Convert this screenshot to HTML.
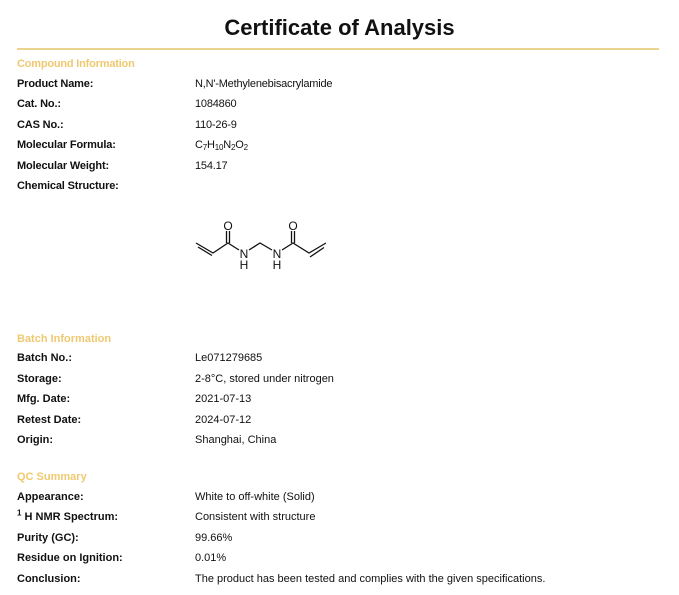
<!DOCTYPE html>
<html><head><meta charset="utf-8"><style>
body{margin:0;width:679px;height:595px;background:#fff;position:relative;font-family:"Liberation Sans",Arial,sans-serif;color:#111;overflow:hidden}
.t{position:absolute;left:0;width:679px;text-align:center;top:15px;font-size:22px;font-weight:bold}
.line{position:absolute;left:17px;width:642px;top:48px;height:2px;background:#ead48f}
.h{position:absolute;left:17px;font-size:11px;font-weight:bold;color:#efc970;line-height:13px}
.l,.v{position:absolute;font-size:11px;line-height:13px;white-space:nowrap}
.l{left:17px;font-weight:bold}
.v{left:195px}
.l.n{letter-spacing:-0.15px}
.v.n,.h.n{letter-spacing:-0.2px}
sub{font-size:8px;vertical-align:-2px;line-height:0}
sup{font-size:8px;line-height:0}
</style></head><body>
<div class="t">Certificate of Analysis</div>
<div class="line"></div>
<div class="h n" style="top:58px">Compound Information</div>
<div class="l n" style="top:78px">Product Name:</div><div class="v n" style="top:78px">N,N'-Methylenebisacrylamide</div>
<div class="l n" style="top:98px">Cat. No.:</div><div class="v n" style="top:98px">1084860</div>
<div class="l n" style="top:119px">CAS No.:</div><div class="v n" style="top:119px">110-26-9</div>
<div class="l n" style="top:139px">Molecular Formula:</div><div class="v n" style="top:139px">C<sub>7</sub>H<sub>10</sub>N<sub>2</sub>O<sub>2</sub></div>
<div class="l n" style="top:160px">Molecular Weight:</div><div class="v n" style="top:160px">154.17</div>
<div class="l n" style="top:180px">Chemical Structure:</div>
<svg style="position:absolute;left:0;top:0" width="679" height="595" font-family="Liberation Sans" font-size="12" fill="#111">
<g stroke="#111" stroke-width="1.3" fill="none">
<polyline points="196,243 213,253 228,243 239,250"/>
<line x1="198" y1="247" x2="212" y2="255.5"/>
<line x1="226.5" y1="243" x2="226.5" y2="231"/><line x1="229.5" y1="243" x2="229.5" y2="231"/>
<polyline points="249,250 260,243 272,250"/>
<polyline points="282,250 293,243 309,253 326,243"/>
<line x1="291.5" y1="243" x2="291.5" y2="231"/><line x1="294.5" y1="243" x2="294.5" y2="231"/>
<line x1="310" y1="257" x2="324" y2="247.5"/>
</g>
<text x="228" y="230" text-anchor="middle">O</text>
<text x="293" y="230" text-anchor="middle">O</text>
<text x="244" y="258" text-anchor="middle">N</text>
<text x="244" y="269" text-anchor="middle">H</text>
<text x="277" y="258" text-anchor="middle">N</text>
<text x="277" y="269" text-anchor="middle">H</text>
</svg>
<div class="h" style="top:333px">Batch Information</div>
<div class="l" style="top:352px">Batch No.:</div><div class="v" style="top:352px">Le071279685</div>
<div class="l" style="top:373px">Storage:</div><div class="v" style="top:373px">2-8°C, stored under nitrogen</div>
<div class="l" style="top:393px">Mfg. Date:</div><div class="v" style="top:393px">2021-07-13</div>
<div class="l" style="top:414px">Retest Date:</div><div class="v" style="top:414px">2024-07-12</div>
<div class="l" style="top:434px">Origin:</div><div class="v" style="top:434px">Shanghai, China</div>
<div class="h" style="top:471px">QC Summary</div>
<div class="l" style="top:491px">Appearance:</div><div class="v" style="top:491px">White to off-white (Solid)</div>
<div class="l" style="top:511px"><sup>1</sup> H NMR Spectrum:</div><div class="v" style="top:511px">Consistent with structure</div>
<div class="l" style="top:532px">Purity (GC):</div><div class="v" style="top:532px">99.66%</div>
<div class="l" style="top:552px">Residue on Ignition:</div><div class="v" style="top:552px">0.01%</div>
<div class="l" style="top:573px">Conclusion:</div><div class="v" style="top:573px">The product has been tested and complies with the given specifications.</div>
</body></html>
